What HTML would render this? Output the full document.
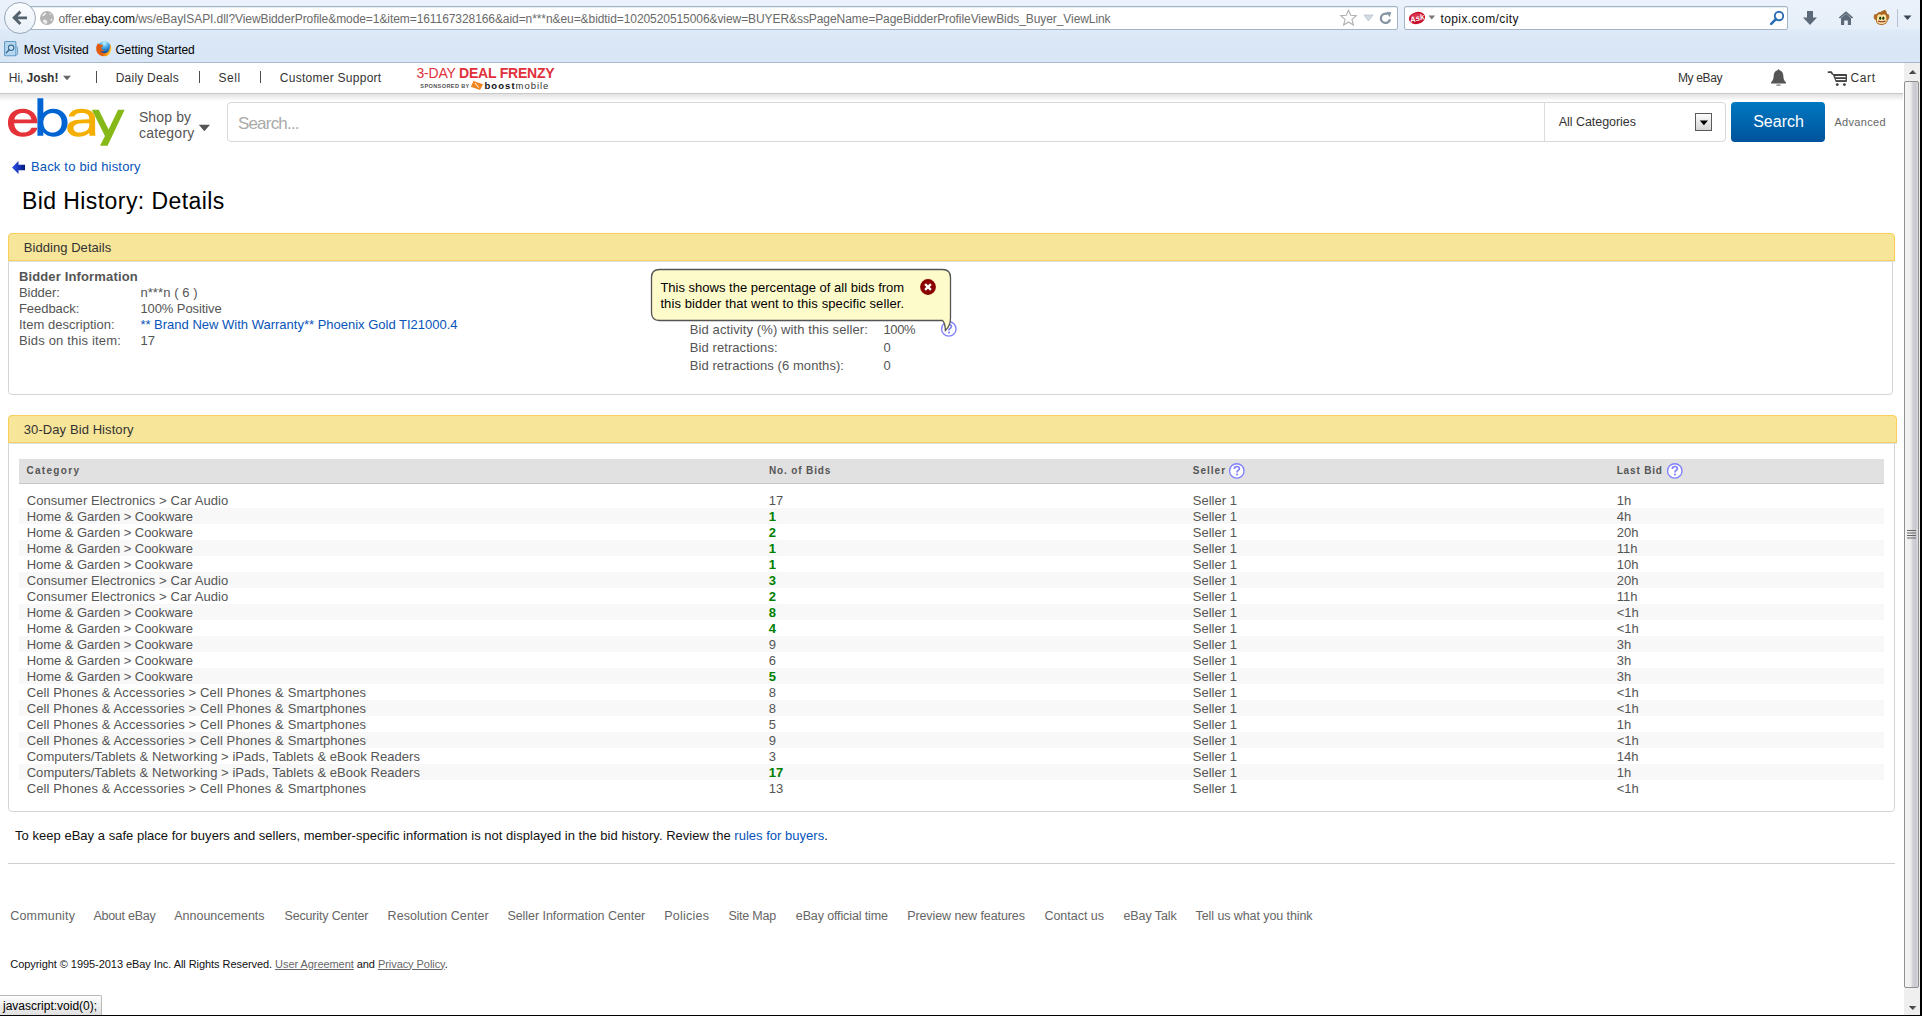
<!DOCTYPE html>
<html><head><meta charset="utf-8">
<style>
*{margin:0;padding:0;box-sizing:border-box}
html,body{width:1922px;height:1016px;overflow:hidden;background:#fff;font-family:"Liberation Sans",sans-serif;position:relative}
.a{position:absolute;white-space:nowrap;line-height:normal}
.s{position:absolute}
#chrome{position:absolute;left:0;top:0;width:1922px;height:63px;background:linear-gradient(#ebf2fb 0px,#e6eef9 29px,#dfeaf7 30px,#dae7f6 40px,#d9e6f5 62px)}
.urlbar{position:absolute;left:20px;top:6px;width:1378px;height:24px;background:#fff;border:1px solid #a3b4c7;border-radius:2px;box-shadow:inset 0 1px 0 #e8edf3}
.sbar{position:absolute;left:1404px;top:6px;width:384px;height:24px;background:#fff;border:1px solid #a3b4c7;border-radius:2px;box-shadow:inset 0 1px 0 #e8edf3}
.back{position:absolute;left:4px;top:2px;width:32px;height:32px;border-radius:50%;border:1px solid #9aa8b8;background:linear-gradient(#fbfdff,#e9f0f8)}
.panel{position:absolute;border:1px solid #d5d5d5;border-radius:4px;background:#fff}
.ph{position:absolute;left:-1px;top:-1px;right:-3px;height:28px;background:#f7e599;border:1px solid #fbcf57;border-radius:4px 4px 0 0;box-shadow:0 1px 0 #dde1e8}
.alt{position:absolute;left:19px;width:1865px;height:16px;background:#f8f8f8}
.qi{position:absolute}

</style></head>
<body>
<div id="chrome">
  <div class="urlbar"></div>
  <div class="back"></div>
  <svg class="s" style="left:4px;top:2px" width="32" height="32" viewBox="0 0 32 32"><path d="M23 15.9 H12 M16.4 9.6 L10.2 15.8 L16.4 22" fill="none" stroke="#56636f" stroke-width="2.9" stroke-linejoin="miter"/></svg>
  <svg class="s" style="left:39px;top:10px" width="16" height="16" viewBox="0 0 16 16"><circle cx="8" cy="8" r="7" fill="#b3b3b3"/><path d="M3.2 5 Q5 2.5 7 2.5 Q8 3.5 6.5 4.5 Q5.5 6 3.5 6.5 Z M10 2.5 Q12 3.5 12.5 5 Q11 5 10.5 4 Z M4 10 Q6 9 8 10.5 Q9 12 7.5 14 Q5 13.5 3.8 11.5 Z M12.5 8 Q13.5 9 13 11 Q12 11.5 11.5 10.5 Z" fill="#ececec"/></svg>
  <svg class="s" style="left:1339px;top:9px" width="19" height="18" viewBox="0 0 19 18"><path d="M9.5 1.2 L11.7 6.3 L17.3 6.7 L13 10.4 L14.4 16 L9.5 13 L4.6 16 L6 10.4 L1.7 6.7 L7.3 6.3 Z" fill="#fff" stroke="#b0b0b0" stroke-width="1.1"/></svg>
  <svg class="s" style="left:1363px;top:14px" width="11" height="8" viewBox="0 0 11 8"><path d="M1 1 H10 L5.5 7 Z" fill="#d4dbe4" stroke="#b9c3ce" stroke-width="0.8"/></svg>
  <svg class="s" style="left:1379px;top:11px" width="14" height="14" viewBox="0 0 14 14"><path d="M11 8.2 A4.6 4.6 0 1 1 8.5 3.2" fill="none" stroke="#8593a2" stroke-width="2.2"/><path d="M7.2 0.8 L12.3 1.2 L10.6 6.2 Z" fill="#8593a2"/></svg>
  <div class="sbar"></div>
  <svg class="s" style="left:1408px;top:11px" width="18" height="14" viewBox="0 0 18 14"><ellipse cx="9" cy="7" rx="8.2" ry="6" transform="rotate(-14 9 7)" fill="#c8102e"/><ellipse cx="8" cy="5" rx="5" ry="2.5" transform="rotate(-14 8 5)" fill="#e85a6b" opacity=".5"/><text x="9" y="10" font-family="Liberation Sans" font-weight="bold" font-style="italic" font-size="8" fill="#fff" text-anchor="middle" transform="rotate(-14 9 7)">Ask</text></svg>
  <svg class="s" style="left:1428px;top:15px" width="8" height="5" viewBox="0 0 8 5"><path d="M0.5 0.5 H7 L3.75 4.5Z" fill="#777"/></svg>
  <svg class="s" style="left:1769px;top:10px" width="16" height="16" viewBox="0 0 16 16"><circle cx="10" cy="6" r="4.2" fill="none" stroke="#2d6db3" stroke-width="1.9"/><path d="M7 9 L2.2 13.8" stroke="#2d6db3" stroke-width="2.6" stroke-linecap="round"/></svg>
  <svg class="s" style="left:1802px;top:10px" width="16" height="16" viewBox="0 0 16 16"><path d="M5 1 H11 V7.5 H15 L8 15 L1 7.5 H5 Z" fill="#5b6978"/></svg>
  <svg class="s" style="left:1838px;top:10px" width="16" height="16" viewBox="0 0 16 16"><path d="M8 1.2 L15.2 7.6 L14 8.6 L8 3.4 L2 8.6 L0.8 7.6 Z" fill="#5b6978"/><path d="M3 8 L8 3.8 L13 8 V15 H9.8 V10.5 H6.2 V15 H3 Z" fill="#5b6978"/></svg>
  <svg class="s" style="left:1873px;top:9px" width="18" height="17" viewBox="0 0 18 17"><ellipse cx="2.4" cy="8" rx="1.7" ry="2.9" fill="#b0702a"/><ellipse cx="14.6" cy="8" rx="1.7" ry="2.9" fill="#b0702a"/><path d="M3 7 C3 4.5 5 3.2 7.5 3 C9 2 10.5 1.2 12.8 0.8 C12 1.8 12.8 2.2 13.8 2.6 C13.2 3 13.6 3.6 14 4.5 C14.8 6 14.8 8 14.6 10 C15 12.5 13.5 15.8 8.6 15.9 C4 15.9 2.6 13 3 10.5 C2.8 9 2.8 8 3 7Z" fill="#a8661f"/><path d="M4.2 8 C4.2 6 5.5 5.2 7 5.3 C7.8 5.4 8.3 6 8.6 6.5 C8.9 6 9.5 5.4 10.3 5.3 C12 5.2 13.3 6 13.3 8 C13.3 9 13.4 10 13.6 11 C13.8 13.4 12 15 8.6 15 C5.2 15 3.6 13.4 3.8 11 C4 10 4.2 9 4.2 8Z" fill="#fde2a2"/><ellipse cx="7.2" cy="9.2" rx="1.05" ry="1.6" fill="#0b3d12"/><ellipse cx="10.3" cy="9.2" rx="1.05" ry="1.6" fill="#0b3d12"/><path d="M5 12 Q8.7 13.6 12.5 12" fill="none" stroke="#8f3325" stroke-width="1.1"/></svg>
  <div class="s" style="left:1897px;top:9px;width:1px;height:18px;background:#b3c1d1"></div>
  <svg class="s" style="left:1903px;top:15px" width="9" height="6" viewBox="0 0 9 6"><path d="M0.5 0.5 H8.5 L4.5 5Z" fill="#3a4756"/></svg>
  <svg class="s" style="left:4px;top:41px" width="16" height="16" viewBox="0 0 16 16"><path d="M11.6 5.6 H12.6 Q13.6 5.6 13.6 6.6 V12.8 Q13.6 13.8 12.6 13.8 H11.6" fill="#d2e6f5" stroke="#6ea3cb" stroke-width="1"/><rect x="0.55" y="0.55" width="11.3" height="14.2" rx="1" fill="#b7d7f0" stroke="#639ac4" stroke-width="1.1"/><circle cx="7.1" cy="6.8" r="2.7" fill="#c5e2f6" stroke="#3e6d93" stroke-width="1.1"/><path d="M5.2 8.8 L2.3 11.7" stroke="#3e6d93" stroke-width="1.5" stroke-linecap="round"/></svg>
  <svg class="s" style="left:95px;top:40px" width="17" height="17" viewBox="0 0 17 17"><defs><radialGradient id="fg" cx="0.5" cy="0.15" r="0.9"><stop offset="0" stop-color="#c0f8ff"/><stop offset="0.45" stop-color="#3a9fe4"/><stop offset="1" stop-color="#02267a"/></radialGradient><linearGradient id="ff" x1="0" y1="0.2" x2="1" y2="0.5"><stop offset="0" stop-color="#e2540c"/><stop offset="0.55" stop-color="#e0600e"/><stop offset="0.85" stop-color="#ffa51c"/><stop offset="1" stop-color="#ffd83a"/></linearGradient></defs><circle cx="9.3" cy="7.6" r="6.4" fill="url(#fg)"/><path d="M2.6 3.6 Q0.6 7 1.3 10.6 Q2.4 15 7 16.1 Q12 17 15 13.4 Q16.8 10.6 16.2 7 Q15.8 5 14.8 4 Q15.4 7.2 14.2 10 Q12.6 13.2 9.2 13.3 Q6.2 13.2 5.2 10.8 Q7.4 11.8 9.6 10.8 Q7.6 10.4 6.6 9.2 Q5.6 7.6 7.2 6.7 Q8.4 6 7.8 4.6 Q6.4 5.2 5.2 4.4 Q3.8 4.2 2.6 3.6Z" fill="url(#ff)"/></svg>
  <div class="s" style="left:0;top:62px;width:1922px;height:1px;background:#a6b7cb"></div>
</div>

<!-- nav -->
<div class="s" style="left:0;top:93px;width:1903px;height:1px;background:#c9c9c9"></div>
<div class="s" style="left:0;top:94px;width:1903px;height:7px;background:linear-gradient(#e1e1e1,#fff)"></div>
<svg class="s" style="left:62px;top:75px" width="10" height="6" viewBox="0 0 10 6"><path d="M1 0.8 H9 L5 5.2Z" fill="#666"/></svg>
<div class="s" style="left:96px;top:71px;width:1px;height:12px;background:#4d4d4d"></div>
<div class="s" style="left:199px;top:71px;width:1px;height:12px;background:#4d4d4d"></div>
<div class="s" style="left:260px;top:71px;width:1px;height:12px;background:#4d4d4d"></div>
<svg class="s" style="left:1770px;top:68px" width="17" height="19" viewBox="0 0 17 19"><path d="M8.5 1 L9.6 2.2 C12 2.8 13.2 5 13.3 7.5 C13.4 10.8 14 12.6 16 14.6 V15.4 H1 V14.6 C3 12.6 3.6 10.8 3.7 7.5 C3.8 5 5 2.8 7.4 2.2 Z" fill="#555"/><path d="M6.4 16.6 H10.6 V17.6 H6.4Z" fill="#555"/></svg>
<svg class="s" style="left:1827px;top:70px" width="21" height="17" viewBox="0 0 21 17"><path d="M0.8 2.1 H4.2 L5.8 4.6" fill="none" stroke="#444" stroke-width="1.7"/><path d="M5.6 4 H19.1 Q20 4 20 4.9 V11 Q20 11.9 19.1 11.9 H8.7 Z" fill="#444"/><rect x="8.2" y="6" width="10.4" height="1.2" fill="#fff"/><rect x="8.9" y="9" width="9.7" height="1.1" fill="#fff"/><circle cx="10.3" cy="14.6" r="1.45" fill="#444"/><circle cx="17.4" cy="14.6" r="1.45" fill="#444"/></svg>
<div class="a" style="left:416.5px;top:65.3px;font-size:14px;color:#e0313c;letter-spacing:-0.22px"><span style="font-weight:normal">3-DAY </span><b>DEAL FRENZY</b></div>
<div class="a" style="left:420.3px;top:83.3px;font-size:5.6px;font-weight:bold;color:#555;letter-spacing:0.36px">SPONSORED BY</div>
<svg class="s" style="left:470px;top:80px" width="14" height="11" viewBox="0 0 14 11"><path d="M3.5 1 L13 4.2 L10 10 L0.8 6.8 Z" fill="#f08420"/><path d="M5 3 L8.6 7.6" stroke="#fff" stroke-width="1"/></svg>
<div class="a" style="left:484.5px;top:79.7px;font-size:9.5px;font-weight:bold;color:#111;letter-spacing:1.05px">boost<span style="font-weight:normal;color:#333;letter-spacing:0.95px">mobile</span></div>
<!-- header -->
<svg class="s" style="left:4px;top:94px" width="126" height="56" viewBox="0 0 1922 854">
 <path fill-rule="evenodd" fill="#e53238" d="M285 225 C420 225 510 310 510 440 L510 445 L155 445 C160 530 215 588 295 588 C360 588 400 560 420 515 L510 515 C490 600 405 652 290 652 C150 652 60 570 60 440 C60 305 150 225 285 225 Z M158 390 L418 390 C410 325 360 288 290 288 C220 288 168 325 158 390 Z"/>
 <path fill-rule="evenodd" fill="#0064d2" d="M510 65 L600 65 L600 290 C630 250 690 225 750 225 C880 225 970 315 970 437 C970 560 880 652 750 652 C690 652 630 625 600 585 L600 635 L510 635 Z M740 290 C660 290 600 350 600 437 C600 525 660 587 740 587 C825 587 880 525 880 437 C880 350 825 290 740 290 Z"/>
 <path fill-rule="evenodd" fill="#f5af02" d="M990 345 C1000 270 1070 225 1180 225 C1310 225 1390 275 1390 385 L1390 560 C1390 590 1392 612 1395 635 L1305 635 C1302 620 1300 605 1300 590 C1265 630 1205 652 1130 652 C1030 652 965 600 965 520 C965 420 1060 390 1200 388 L1300 386 L1300 375 C1300 315 1260 290 1185 290 C1115 290 1080 310 1075 345 Z M1300 445 L1200 447 C1110 450 1060 470 1060 520 C1060 562 1090 588 1145 588 C1230 588 1300 550 1300 480 Z"/>
 <path fill="#86b817" d="M1340 240 L1445 240 L1595 540 L1740 240 L1840 240 L1580 790 L1465 790 L1540 640 Z"/>
</svg>
<svg class="s" style="left:198px;top:124px" width="13" height="8" viewBox="0 0 13 8"><path d="M0.8 0.8 H12 L6.4 7.2Z" fill="#555"/></svg>
<div class="s" style="left:227px;top:102px;width:1499px;height:40px;border:1px solid #d8d8d8;border-radius:4px"></div>
<div class="s" style="left:1544px;top:103px;width:1px;height:38px;background:#dcdcdc"></div>
<div class="s" style="left:1695px;top:113px;width:17px;height:18px;border:1px solid #5a5a5a;background:linear-gradient(#fdfdfd,#d5d5d5)"></div>
<svg class="s" style="left:1699px;top:120px" width="10" height="6" viewBox="0 0 10 6"><path d="M0.8 0.5 H9 L4.9 5.2Z" fill="#000"/></svg>
<div class="s" style="left:1731px;top:102px;width:94px;height:40px;border-radius:4px;background:linear-gradient(#0079c1,#00529b)"></div>
<svg class="s" style="left:11px;top:160px" width="16" height="15" viewBox="0 0 16 15"><defs><linearGradient id="ga" x1="0" x2="1"><stop offset="0" stop-color="#3355ee"/><stop offset="1" stop-color="#001a80"/></linearGradient></defs><path d="M1 7.5 L7.5 1 L7.5 4.8 L14 4.8 L14 10.2 L7.5 10.2 L7.5 14 Z" fill="url(#ga)"/></svg>

<!-- panel 1 -->
<div class="panel" style="left:8px;top:233px;width:1885px;height:162px"><div class="ph"></div></div>
<svg class="s" style="left:940px;top:320px" width="18" height="18" viewBox="0 0 18 18"><circle cx="8.8" cy="8.9" r="7.2" fill="#fff" stroke="#7f7fff" stroke-width="1.35"/><path d="M6.3 6.9 Q6.3 4.5 8.9 4.5 Q11.4 4.5 11.4 6.6 Q11.4 7.9 10 8.6 Q9 9.2 9 10.6" fill="none" stroke="#7f7fff" stroke-width="1.7"/><rect x="8.1" y="11.6" width="1.8" height="1.8" fill="#7f7fff"/></svg>
<svg class="s" style="left:650px;top:268px" width="304" height="66" viewBox="0 0 304 66"><path d="M9.5 1.5 H292.5 Q300.5 1.5 300.5 9.5 V50 Q300.5 58 295.4 62.4 Q295 54.5 292.5 52.5 H9.5 Q1.5 52.5 1.5 44.5 V9.5 Q1.5 1.5 9.5 1.5 Z" fill="#fefbcb" stroke="#545454" stroke-width="1.3"/></svg>
<svg class="s" style="left:920px;top:279px" width="16" height="16" viewBox="0 0 16 16"><circle cx="8" cy="8" r="7.9" fill="#8b0000"/><path d="M5.1 5.1 L10.9 10.9 M10.9 5.1 L5.1 10.9" stroke="#fff" stroke-width="2.3"/></svg>

<!-- panel 2 -->
<div class="panel" style="left:8px;top:415px;width:1887px;height:397px"><div class="ph"></div></div>
<div class="s" style="left:19px;top:459px;width:1865px;height:25px;background:#e1e1e1;border-bottom:1px solid #c8c8c8"></div>
<svg class="s" style="left:1228px;top:462px" width="18" height="18" viewBox="0 0 18 18"><circle cx="8.8" cy="8.9" r="7.2" fill="#fff" stroke="#7f7fff" stroke-width="1.35"/><path d="M6.3 6.9 Q6.3 4.5 8.9 4.5 Q11.4 4.5 11.4 6.6 Q11.4 7.9 10 8.6 Q9 9.2 9 10.6" fill="none" stroke="#7f7fff" stroke-width="1.7"/><rect x="8.1" y="11.6" width="1.8" height="1.8" fill="#7f7fff"/></svg>
<svg class="s" style="left:1666px;top:462px" width="18" height="18" viewBox="0 0 18 18"><circle cx="8.8" cy="8.9" r="7.2" fill="#fff" stroke="#7f7fff" stroke-width="1.35"/><path d="M6.3 6.9 Q6.3 4.5 8.9 4.5 Q11.4 4.5 11.4 6.6 Q11.4 7.9 10 8.6 Q9 9.2 9 10.6" fill="none" stroke="#7f7fff" stroke-width="1.7"/><rect x="8.1" y="11.6" width="1.8" height="1.8" fill="#7f7fff"/></svg>
<div class="alt" style="top:508px"></div>
<div class="alt" style="top:540px"></div>
<div class="alt" style="top:572px"></div>
<div class="alt" style="top:604px"></div>
<div class="alt" style="top:636px"></div>
<div class="alt" style="top:668px"></div>
<div class="alt" style="top:700px"></div>
<div class="alt" style="top:732px"></div>
<div class="alt" style="top:764px"></div>
<div class="s" style="left:8px;top:863px;width:1887px;height:1px;background:#cfcfcf"></div>

<!-- scrollbar -->
<div class="s" style="left:1904px;top:63px;width:16px;height:952px;background:#efefef"></div>
<svg class="s" style="left:1909px;top:69px" width="8" height="6" viewBox="0 0 8 6"><defs><linearGradient id="gs" x1="0" x2="1"><stop offset="0" stop-color="#222"/><stop offset="1" stop-color="#777"/></linearGradient></defs><path d="M0 5 L3.8 1 L7.6 5Z" fill="url(#gs)"/></svg>
<div class="s" style="left:1904px;top:81px;width:15px;height:907px;border:1px solid #8f8f8f;border-radius:2px;background:linear-gradient(90deg,#f4f4f4,#ededed 45%,#d0d0d6 60%,#c8c8d0 85%,#e0e0e0)"></div>
<svg class="s" style="left:1906px;top:528px" width="11" height="12" viewBox="0 0 11 12"><path d="M1 2.5 H10 M1 5 H10 M1 7.5 H10 M1 10 H10" stroke="#666" stroke-width="1"/></svg>
<svg class="s" style="left:1909px;top:1005px" width="8" height="6" viewBox="0 0 8 6"><path d="M0 1 L7.6 1 L3.8 5Z" fill="url(#gs)"/></svg>
<div class="s" style="left:1920px;top:0;width:2px;height:1016px;background:#000"></div>
<div class="s" style="left:0;top:1015px;width:1922px;height:1px;background:#000"></div>
<!-- status -->
<div class="s" style="left:0;top:995px;width:102px;height:20px;background:linear-gradient(#fdfdfd,#e0e0e0);border:1px solid #b9b9b9;border-left:none;border-bottom:none;border-radius:0 2px 0 0"></div>

<div class="a" id="t0" style="left:58.40px;top:11.71px;font-size:12px;letter-spacing:-0.075px;color:#6a6a6a">offer.<span style="color:#111">ebay.com</span>/ws/eBayISAPI.dll?ViewBidderProfile&amp;mode=1&amp;item=161167328166&amp;aid=n***n&amp;eu=&amp;bidtid=1020520515006&amp;view=BUYER&amp;ssPageName=PageBidderProfileViewBids_Buyer_ViewLink</div>
<div class="a" id="t1" style="left:1440.40px;top:11.71px;font-size:12px;letter-spacing:0.424px;color:#111">topix.com/city</div>
<div class="a" id="t2" style="left:23.80px;top:42.71px;font-size:12px;letter-spacing:-0.013px;color:#000">Most Visited</div>
<div class="a" id="t3" style="left:115.40px;top:42.71px;font-size:12px;letter-spacing:-0.101px;color:#000">Getting Started</div>
<div class="a" id="t4" style="left:8.80px;top:71.00px;font-size:12px;letter-spacing:-0.053px;color:#333">Hi, <b style="color:#333">Josh!</b></div>
<div class="a" id="t5" style="left:115.70px;top:71.00px;font-size:12px;letter-spacing:0.231px;color:#333">Daily Deals</div>
<div class="a" id="t6" style="left:218.40px;top:71.00px;font-size:12px;letter-spacing:0.561px;color:#333">Sell</div>
<div class="a" id="t7" style="left:279.80px;top:71.00px;font-size:12px;letter-spacing:0.268px;color:#333">Customer Support</div>
<div class="a" id="t8" style="left:1677.90px;top:71.00px;font-size:12px;letter-spacing:-0.331px;color:#333">My eBay</div>
<div class="a" id="t9" style="left:1850.40px;top:71.00px;font-size:12px;letter-spacing:0.674px;color:#333">Cart</div>
<div class="a" id="t10" style="left:138.90px;top:109.00px;font-size:14px;letter-spacing:0.137px;color:#555">Shop by</div>
<div class="a" id="t11" style="left:138.90px;top:124.71px;font-size:14px;letter-spacing:0.242px;color:#555">category</div>
<div class="a" id="t12" style="left:237.90px;top:114.21px;font-size:17px;letter-spacing:-0.793px;color:#aaa">Search...</div>
<div class="a" id="t13" style="left:1558.70px;top:115.21px;font-size:12.5px;letter-spacing:-0.040px;color:#333">All Categories</div>
<div class="a" id="t14" style="left:1753.20px;top:112.81px;font-size:16px;letter-spacing:-0.001px;color:#fff">Search</div>
<div class="a" id="t15" style="left:1834.40px;top:115.91px;font-size:11px;letter-spacing:0.323px;color:#666">Advanced</div>
<div class="a" id="t16" style="left:30.90px;top:158.60px;font-size:13px;letter-spacing:0.193px;color:#0654ba">Back to bid history</div>
<div class="a" id="t17" style="left:21.90px;top:187.75px;font-size:23px;letter-spacing:0.430px;color:#000">Bid History: Details</div>
<div class="a" id="t18" style="left:23.80px;top:239.81px;font-size:13px;letter-spacing:0.049px;color:#333">Bidding Details</div>
<div class="a" id="t19" style="left:18.90px;top:268.91px;font-size:13px;letter-spacing:0.148px;color:#555;font-weight:bold">Bidder Information</div>
<div class="a" id="t20" style="left:18.90px;top:284.91px;font-size:13px;letter-spacing:-0.032px;color:#555">Bidder:</div>
<div class="a" id="t21" style="left:140.40px;top:284.91px;font-size:13px;letter-spacing:0.083px;color:#555">n***n ( 6 )</div>
<div class="a" id="t22" style="left:18.90px;top:300.91px;font-size:13px;letter-spacing:-0.027px;color:#555">Feedback:</div>
<div class="a" id="t23" style="left:140.40px;top:300.91px;font-size:13px;letter-spacing:-0.091px;color:#555">100% Positive</div>
<div class="a" id="t24" style="left:18.90px;top:316.91px;font-size:13px;letter-spacing:0.020px;color:#555">Item description:</div>
<div class="a" id="t25" style="left:140.40px;top:316.91px;font-size:13px;letter-spacing:-0.000px;color:#0654ba">** Brand New With Warranty** Phoenix Gold TI21000.4</div>
<div class="a" id="t26" style="left:18.90px;top:332.91px;font-size:13px;letter-spacing:0.171px;color:#555">Bids on this item:</div>
<div class="a" id="t27" style="left:140.40px;top:332.91px;font-size:13px;letter-spacing:0.238px;color:#555">17</div>
<div class="a" id="t28" style="left:689.80px;top:322.00px;font-size:13px;letter-spacing:0.099px;color:#555">Bid activity (%) with this seller:</div>
<div class="a" id="t29" style="left:883.40px;top:322.00px;font-size:13px;letter-spacing:-0.354px;color:#555">100%</div>
<div class="a" id="t30" style="left:689.80px;top:340.00px;font-size:13px;letter-spacing:0.073px;color:#555">Bid retractions:</div>
<div class="a" id="t31" style="left:883.40px;top:340.00px;font-size:13px;color:#555">0</div>
<div class="a" id="t32" style="left:689.80px;top:358.00px;font-size:13px;letter-spacing:0.067px;color:#555">Bid retractions (6 months):</div>
<div class="a" id="t33" style="left:883.40px;top:358.00px;font-size:13px;color:#555">0</div>
<div class="a" id="t34" style="left:660.40px;top:279.91px;font-size:13px;letter-spacing:0.007px;color:#000">This shows the percentage of all bids from</div>
<div class="a" id="t35" style="left:660.40px;top:295.81px;font-size:13px;letter-spacing:0.100px;color:#000">this bidder that went to this specific seller.</div>
<div class="a" id="t36" style="left:23.80px;top:421.81px;font-size:13px;letter-spacing:0.084px;color:#333">30-Day Bid History</div>
<div class="a" id="t37" style="left:26.40px;top:465.00px;font-size:10px;letter-spacing:1.322px;color:#555;font-weight:bold">Category</div>
<div class="a" id="t38" style="left:768.90px;top:465.00px;font-size:10px;letter-spacing:0.872px;color:#555;font-weight:bold">No. of Bids</div>
<div class="a" id="t39" style="left:1192.70px;top:465.00px;font-size:10px;letter-spacing:1.030px;color:#555;font-weight:bold">Seller</div>
<div class="a" id="t40" style="left:1616.70px;top:465.00px;font-size:10px;letter-spacing:0.821px;color:#555;font-weight:bold">Last Bid</div>
<div class="a" id="t41" style="left:26.70px;top:492.81px;font-size:13px;letter-spacing:0.079px;color:#555">Consumer Electronics &gt; Car Audio</div>
<div class="a" id="t42" style="left:768.70px;top:492.81px;font-size:13px;color:#555">17</div>
<div class="a" id="t43" style="left:1192.70px;top:492.81px;font-size:13px;letter-spacing:0.030px;color:#555">Seller 1</div>
<div class="a" id="t44" style="left:1616.70px;top:492.81px;font-size:13px;color:#555">1h</div>
<div class="a" id="t45" style="left:26.70px;top:508.81px;font-size:13px;letter-spacing:-0.038px;color:#555">Home &amp; Garden &gt; Cookware</div>
<div class="a" id="t46" style="left:768.70px;top:508.81px;font-size:13px;color:#008000;font-weight:bold">1</div>
<div class="a" id="t47" style="left:1192.70px;top:508.81px;font-size:13px;letter-spacing:0.030px;color:#555">Seller 1</div>
<div class="a" id="t48" style="left:1616.70px;top:508.81px;font-size:13px;color:#555">4h</div>
<div class="a" id="t49" style="left:26.70px;top:524.81px;font-size:13px;letter-spacing:-0.038px;color:#555">Home &amp; Garden &gt; Cookware</div>
<div class="a" id="t50" style="left:768.70px;top:524.81px;font-size:13px;color:#008000;font-weight:bold">2</div>
<div class="a" id="t51" style="left:1192.70px;top:524.81px;font-size:13px;letter-spacing:0.030px;color:#555">Seller 1</div>
<div class="a" id="t52" style="left:1616.70px;top:524.81px;font-size:13px;color:#555">20h</div>
<div class="a" id="t53" style="left:26.70px;top:540.81px;font-size:13px;letter-spacing:-0.038px;color:#555">Home &amp; Garden &gt; Cookware</div>
<div class="a" id="t54" style="left:768.70px;top:540.81px;font-size:13px;color:#008000;font-weight:bold">1</div>
<div class="a" id="t55" style="left:1192.70px;top:540.81px;font-size:13px;letter-spacing:0.030px;color:#555">Seller 1</div>
<div class="a" id="t56" style="left:1616.70px;top:540.81px;font-size:13px;color:#555">11h</div>
<div class="a" id="t57" style="left:26.70px;top:556.81px;font-size:13px;letter-spacing:-0.038px;color:#555">Home &amp; Garden &gt; Cookware</div>
<div class="a" id="t58" style="left:768.70px;top:556.81px;font-size:13px;color:#008000;font-weight:bold">1</div>
<div class="a" id="t59" style="left:1192.70px;top:556.81px;font-size:13px;letter-spacing:0.030px;color:#555">Seller 1</div>
<div class="a" id="t60" style="left:1616.70px;top:556.81px;font-size:13px;color:#555">10h</div>
<div class="a" id="t61" style="left:26.70px;top:572.81px;font-size:13px;letter-spacing:0.079px;color:#555">Consumer Electronics &gt; Car Audio</div>
<div class="a" id="t62" style="left:768.70px;top:572.81px;font-size:13px;color:#008000;font-weight:bold">3</div>
<div class="a" id="t63" style="left:1192.70px;top:572.81px;font-size:13px;letter-spacing:0.030px;color:#555">Seller 1</div>
<div class="a" id="t64" style="left:1616.70px;top:572.81px;font-size:13px;color:#555">20h</div>
<div class="a" id="t65" style="left:26.70px;top:588.81px;font-size:13px;letter-spacing:0.079px;color:#555">Consumer Electronics &gt; Car Audio</div>
<div class="a" id="t66" style="left:768.70px;top:588.81px;font-size:13px;color:#008000;font-weight:bold">2</div>
<div class="a" id="t67" style="left:1192.70px;top:588.81px;font-size:13px;letter-spacing:0.030px;color:#555">Seller 1</div>
<div class="a" id="t68" style="left:1616.70px;top:588.81px;font-size:13px;color:#555">11h</div>
<div class="a" id="t69" style="left:26.70px;top:604.81px;font-size:13px;letter-spacing:-0.038px;color:#555">Home &amp; Garden &gt; Cookware</div>
<div class="a" id="t70" style="left:768.70px;top:604.81px;font-size:13px;color:#008000;font-weight:bold">8</div>
<div class="a" id="t71" style="left:1192.70px;top:604.81px;font-size:13px;letter-spacing:0.030px;color:#555">Seller 1</div>
<div class="a" id="t72" style="left:1616.70px;top:604.81px;font-size:13px;color:#555">&lt;1h</div>
<div class="a" id="t73" style="left:26.70px;top:620.81px;font-size:13px;letter-spacing:-0.038px;color:#555">Home &amp; Garden &gt; Cookware</div>
<div class="a" id="t74" style="left:768.70px;top:620.81px;font-size:13px;color:#008000;font-weight:bold">4</div>
<div class="a" id="t75" style="left:1192.70px;top:620.81px;font-size:13px;letter-spacing:0.030px;color:#555">Seller 1</div>
<div class="a" id="t76" style="left:1616.70px;top:620.81px;font-size:13px;color:#555">&lt;1h</div>
<div class="a" id="t77" style="left:26.70px;top:636.81px;font-size:13px;letter-spacing:-0.038px;color:#555">Home &amp; Garden &gt; Cookware</div>
<div class="a" id="t78" style="left:768.70px;top:636.81px;font-size:13px;color:#555">9</div>
<div class="a" id="t79" style="left:1192.70px;top:636.81px;font-size:13px;letter-spacing:0.030px;color:#555">Seller 1</div>
<div class="a" id="t80" style="left:1616.70px;top:636.81px;font-size:13px;color:#555">3h</div>
<div class="a" id="t81" style="left:26.70px;top:652.81px;font-size:13px;letter-spacing:-0.038px;color:#555">Home &amp; Garden &gt; Cookware</div>
<div class="a" id="t82" style="left:768.70px;top:652.81px;font-size:13px;color:#555">6</div>
<div class="a" id="t83" style="left:1192.70px;top:652.81px;font-size:13px;letter-spacing:0.030px;color:#555">Seller 1</div>
<div class="a" id="t84" style="left:1616.70px;top:652.81px;font-size:13px;color:#555">3h</div>
<div class="a" id="t85" style="left:26.70px;top:668.81px;font-size:13px;letter-spacing:-0.038px;color:#555">Home &amp; Garden &gt; Cookware</div>
<div class="a" id="t86" style="left:768.70px;top:668.81px;font-size:13px;color:#008000;font-weight:bold">5</div>
<div class="a" id="t87" style="left:1192.70px;top:668.81px;font-size:13px;letter-spacing:0.030px;color:#555">Seller 1</div>
<div class="a" id="t88" style="left:1616.70px;top:668.81px;font-size:13px;color:#555">3h</div>
<div class="a" id="t89" style="left:26.70px;top:684.81px;font-size:13px;letter-spacing:0.114px;color:#555">Cell Phones &amp; Accessories &gt; Cell Phones &amp; Smartphones</div>
<div class="a" id="t90" style="left:768.70px;top:684.81px;font-size:13px;color:#555">8</div>
<div class="a" id="t91" style="left:1192.70px;top:684.81px;font-size:13px;letter-spacing:0.030px;color:#555">Seller 1</div>
<div class="a" id="t92" style="left:1616.70px;top:684.81px;font-size:13px;color:#555">&lt;1h</div>
<div class="a" id="t93" style="left:26.70px;top:700.81px;font-size:13px;letter-spacing:0.114px;color:#555">Cell Phones &amp; Accessories &gt; Cell Phones &amp; Smartphones</div>
<div class="a" id="t94" style="left:768.70px;top:700.81px;font-size:13px;color:#555">8</div>
<div class="a" id="t95" style="left:1192.70px;top:700.81px;font-size:13px;letter-spacing:0.030px;color:#555">Seller 1</div>
<div class="a" id="t96" style="left:1616.70px;top:700.81px;font-size:13px;color:#555">&lt;1h</div>
<div class="a" id="t97" style="left:26.70px;top:716.81px;font-size:13px;letter-spacing:0.114px;color:#555">Cell Phones &amp; Accessories &gt; Cell Phones &amp; Smartphones</div>
<div class="a" id="t98" style="left:768.70px;top:716.81px;font-size:13px;color:#555">5</div>
<div class="a" id="t99" style="left:1192.70px;top:716.81px;font-size:13px;letter-spacing:0.030px;color:#555">Seller 1</div>
<div class="a" id="t100" style="left:1616.70px;top:716.81px;font-size:13px;color:#555">1h</div>
<div class="a" id="t101" style="left:26.70px;top:732.81px;font-size:13px;letter-spacing:0.114px;color:#555">Cell Phones &amp; Accessories &gt; Cell Phones &amp; Smartphones</div>
<div class="a" id="t102" style="left:768.70px;top:732.81px;font-size:13px;color:#555">9</div>
<div class="a" id="t103" style="left:1192.70px;top:732.81px;font-size:13px;letter-spacing:0.030px;color:#555">Seller 1</div>
<div class="a" id="t104" style="left:1616.70px;top:732.81px;font-size:13px;color:#555">&lt;1h</div>
<div class="a" id="t105" style="left:26.70px;top:748.81px;font-size:13px;letter-spacing:0.048px;color:#555">Computers/Tablets &amp; Networking &gt; iPads, Tablets &amp; eBook Readers</div>
<div class="a" id="t106" style="left:768.70px;top:748.81px;font-size:13px;color:#555">3</div>
<div class="a" id="t107" style="left:1192.70px;top:748.81px;font-size:13px;letter-spacing:0.030px;color:#555">Seller 1</div>
<div class="a" id="t108" style="left:1616.70px;top:748.81px;font-size:13px;color:#555">14h</div>
<div class="a" id="t109" style="left:26.70px;top:764.81px;font-size:13px;letter-spacing:0.048px;color:#555">Computers/Tablets &amp; Networking &gt; iPads, Tablets &amp; eBook Readers</div>
<div class="a" id="t110" style="left:768.70px;top:764.81px;font-size:13px;color:#008000;font-weight:bold">17</div>
<div class="a" id="t111" style="left:1192.70px;top:764.81px;font-size:13px;letter-spacing:0.030px;color:#555">Seller 1</div>
<div class="a" id="t112" style="left:1616.70px;top:764.81px;font-size:13px;color:#555">1h</div>
<div class="a" id="t113" style="left:26.70px;top:780.81px;font-size:13px;letter-spacing:0.114px;color:#555">Cell Phones &amp; Accessories &gt; Cell Phones &amp; Smartphones</div>
<div class="a" id="t114" style="left:768.70px;top:780.81px;font-size:13px;color:#555">13</div>
<div class="a" id="t115" style="left:1192.70px;top:780.81px;font-size:13px;letter-spacing:0.030px;color:#555">Seller 1</div>
<div class="a" id="t116" style="left:1616.70px;top:780.81px;font-size:13px;color:#555">&lt;1h</div>
<div class="a" id="t117" style="left:15.10px;top:828.21px;font-size:13px;letter-spacing:0.021px;color:#111">To keep eBay a safe place for buyers and sellers, member-specific information is not displayed in the bid history. Review the <span style="color:#0654ba">rules for buyers</span>.</div>
<div class="a" id="t118" style="left:10.30px;top:909.21px;font-size:12.5px;letter-spacing:0.173px;color:#666">Community</div>
<div class="a" id="t119" style="left:93.40px;top:909.21px;font-size:12.5px;letter-spacing:-0.260px;color:#666">About eBay</div>
<div class="a" id="t120" style="left:174.20px;top:909.21px;font-size:12.5px;letter-spacing:0.005px;color:#666">Announcements</div>
<div class="a" id="t121" style="left:284.50px;top:909.21px;font-size:12.5px;letter-spacing:-0.161px;color:#666">Security Center</div>
<div class="a" id="t122" style="left:387.60px;top:909.21px;font-size:12.5px;letter-spacing:0.059px;color:#666">Resolution Center</div>
<div class="a" id="t123" style="left:507.40px;top:909.21px;font-size:12.5px;letter-spacing:-0.048px;color:#666">Seller Information Center</div>
<div class="a" id="t124" style="left:664.30px;top:909.21px;font-size:12.5px;letter-spacing:0.217px;color:#666">Policies</div>
<div class="a" id="t125" style="left:728.40px;top:909.21px;font-size:12.5px;letter-spacing:-0.219px;color:#666">Site Map</div>
<div class="a" id="t126" style="left:795.80px;top:909.21px;font-size:12.5px;letter-spacing:-0.122px;color:#666">eBay official time</div>
<div class="a" id="t127" style="left:907.20px;top:909.21px;font-size:12.5px;letter-spacing:-0.090px;color:#666">Preview new features</div>
<div class="a" id="t128" style="left:1044.40px;top:909.21px;font-size:12.5px;letter-spacing:-0.018px;color:#666">Contact us</div>
<div class="a" id="t129" style="left:1123.40px;top:909.21px;font-size:12.5px;letter-spacing:-0.071px;color:#666">eBay Talk</div>
<div class="a" id="t130" style="left:1195.60px;top:909.21px;font-size:12.5px;letter-spacing:-0.086px;color:#666">Tell us what you think</div>
<div class="a" id="t131" style="left:10.30px;top:957.51px;font-size:11px;letter-spacing:-0.060px;color:#111">Copyright &copy; 1995-2013 eBay Inc. All Rights Reserved. <span style="color:#666;text-decoration:underline">User Agreement</span> and <span style="color:#666;text-decoration:underline">Privacy Policy</span>.</div>
<div class="a" id="t132" style="left:3.00px;top:998.61px;font-size:12px;letter-spacing:0.004px;color:#000">javascript:void(0);</div>
</body></html>
